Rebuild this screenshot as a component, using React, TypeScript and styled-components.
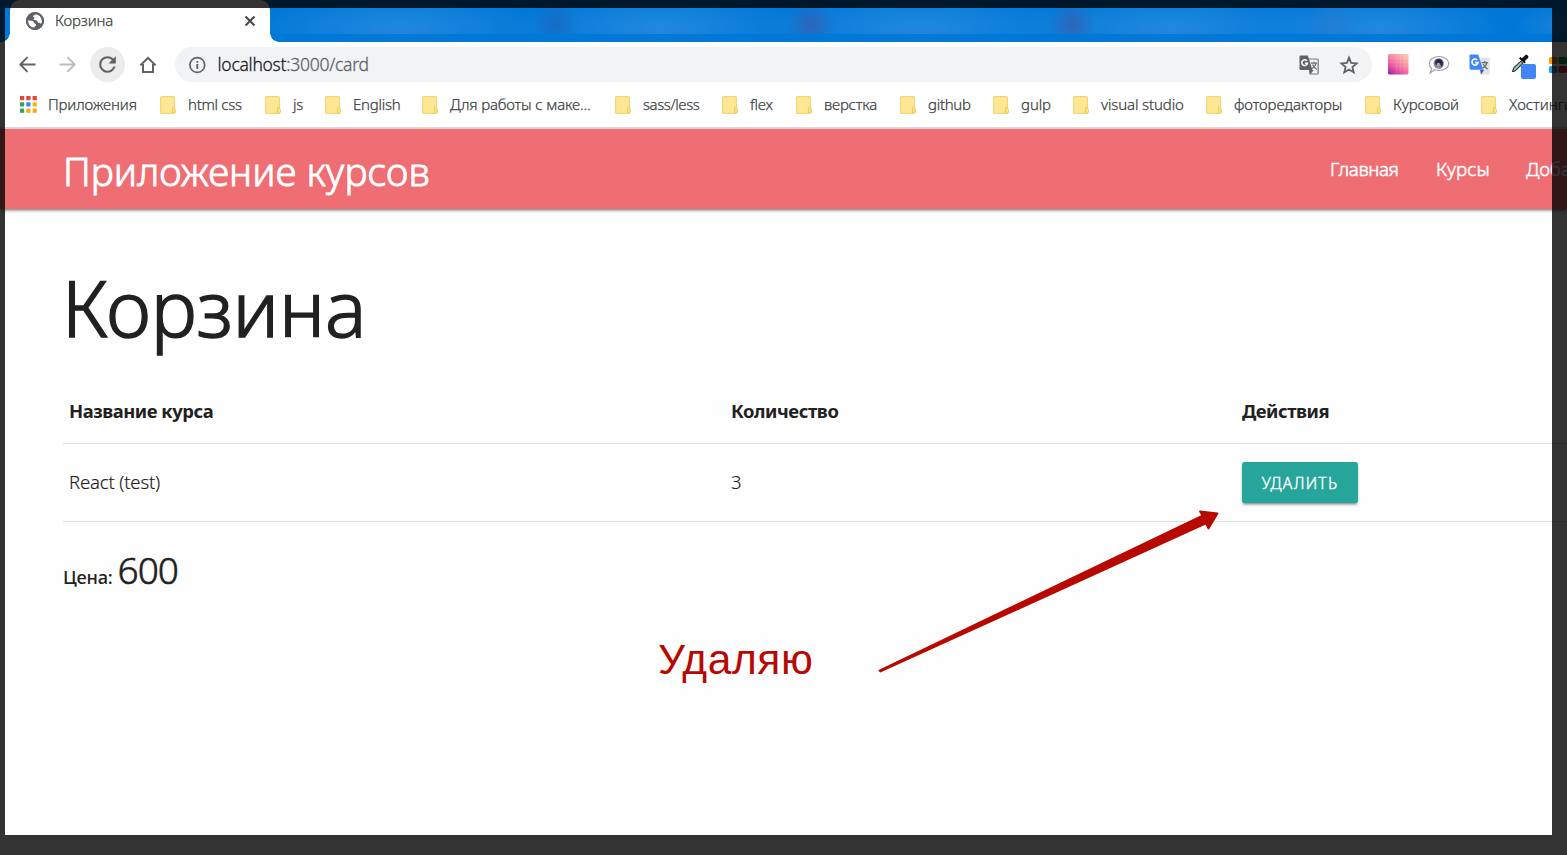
import React from 'react';
import styled, { createGlobalStyle } from 'styled-components';

const GlobalStyle = createGlobalStyle`
  * { box-sizing: border-box; }
  body { margin: 0; overflow: hidden; background: #fff; }
`;

const Screen = styled.div`
  position: relative;
  width: 1567px;
  height: 855px;
  overflow: hidden;
  background: #fefefe;
  color: #212121;
  font-family: 'Noto Sans', 'Open Sans', sans-serif;
`;

const Label = styled.span<{ $size: number; $track?: number; $weight?: number; $color?: string; $stroke?: number }>`
  font-size: ${p => p.$size}px;
  letter-spacing: ${p => p.$track ?? 0}px;
  font-weight: ${p => p.$weight ?? 300};
  color: ${p => p.$color ?? 'inherit'};
  -webkit-text-stroke: ${p => p.$stroke ?? 0}px currentColor;
  white-space: nowrap;
`;

/* ---- browser window ---- */

const TabStrip = styled.div`
  display: flex;
  height: 42px;
  padding-left: 10px;
  background: #0078d7;
`;

const Tab = styled.div`
  position: relative;
  z-index: 1;
  display: flex;
  align-items: center;
  width: 260px;
  height: 42px;
  padding: 0 14px 0 16px;
  border-radius: 10px 10px 0 0;
  background: #fff;
  &::before,
  &::after {
    content: '';
    position: absolute;
    bottom: 0;
    width: 9px;
    height: 9px;
  }
  &::before {
    left: -9px;
    background: radial-gradient(circle at 0 0, transparent 8.5px, #fff 9px);
  }
  &::after {
    right: -9px;
    background: radial-gradient(circle at 100% 0, transparent 8.5px, #fff 9px);
  }
`;

const TabTitle = styled.div`
  flex: 1;
  padding-left: 11px;
  line-height: 40px;
  height: 42px;
  color: #3c4043;
`;

const BlurredTabs = styled.div`
  flex: 1;
  height: 34px;
  background:
    radial-gradient(ellipse 24px 24px at 541px 25px, rgba(70, 84, 165, 0.6), transparent),
    radial-gradient(ellipse 24px 24px at 802px 25px, rgba(70, 84, 165, 0.6), transparent),
    radial-gradient(ellipse 24px 26px at 286px 24px, rgba(30, 100, 190, 0.7), transparent),
    radial-gradient(ellipse 26px 24px at 1060px 24px, rgba(50, 120, 205, 0.5), transparent),
    radial-gradient(ellipse 150px 34px at 130px 28px, #1f87dd 10%, transparent),
    radial-gradient(ellipse 150px 34px at 390px 28px, #1f87dd 10%, transparent),
    radial-gradient(ellipse 160px 34px at 650px 28px, #1f87dd 10%, transparent),
    radial-gradient(ellipse 160px 34px at 900px 28px, #1f87dd 10%, transparent),
    radial-gradient(ellipse 130px 34px at 1110px 28px, #1f87dd 10%, transparent),
    radial-gradient(ellipse 40px 22px at 1285px 26px, #1781da, transparent),
    #0078d7;
`;

const Toolbar = styled.div`
  display: flex;
  align-items: center;
  height: 45px;
  padding-left: 15px;
  background: #fff;
`;

const ToolButton = styled.div<{ $active?: boolean }>`
  display: flex;
  flex: none;
  align-items: center;
  justify-content: center;
  width: 35px;
  height: 35px;
  border-radius: 50%;
  background: ${p => (p.$active ? '#ececed' : 'transparent')};
`;

const NavButtons = styled.div`
  display: flex;
  flex: none;
  gap: 5px;
  width: 165px;
  margin-left: -5px;
`;

const Omnibox = styled.div`
  display: flex;
  flex: none;
  align-items: center;
  width: 1197px;
  height: 35px;
  padding: 0 13px 0 13px;
  border-radius: 18px;
  background: #f1f3f4;
`;

const Url = styled.div`
  flex: 1;
  padding-left: 11.5px;
  line-height: 33px;
`;

const OmniActions = styled.div`
  display: flex;
  gap: 20px;
`;

const Extensions = styled.div`
  display: flex;
  flex: none;
  align-items: center;
  gap: 19px;
  padding-left: 16px;
`;

const PipetteSlot = styled.div`
  display: flex;
  margin: 3px -7px 0 2px;
`;

const Bookmarks = styled.div`
  display: flex;
  height: 42px;
  padding: 0 0 7px 20px;
  border-bottom: 2px solid #ddd5da;
  background: #fff;
  color: #3c4043;
`;

const Bookmark = styled.div<{ $slot: number }>`
  display: flex;
  flex: none;
  align-items: center;
  width: ${p => p.$slot}px;
  line-height: 32px;
`;

const BookmarkIcon = styled.div`
  display: flex;
  flex: none;
  width: 28px;
  padding-top: 2px;
`;

/* ---- page ---- */

const NavBar = styled.nav`
  position: relative;
  display: flex;
  align-items: center;
  height: 80px;
  padding-left: 63px;
  background: #ee6e73;
  color: #fff;
  box-shadow: 0 2px 3px rgba(0, 0, 0, 0.26), 0 3px 2px -2px rgba(0, 0, 0, 0.3);
`;

const Brand = styled.div`
  flex: none;
  width: 1267px;
  padding-top: 12px;
  line-height: 80px;
`;

const NavLink = styled.div<{ $slot: number }>`
  flex: none;
  width: ${p => p.$slot}px;
  line-height: 80px;
`;

const Content = styled.main`
  width: 1600px;
  padding: 40px 0 0 63px;
`;

const Heading = styled.h1`
  height: 131px;
  margin: 0 0 0 -1px;
  line-height: 116px;
  font-weight: 400;
`;

const TableRow = styled.div<{ $height: number }>`
  display: grid;
  grid-template-columns: 662px 511px 1fr;
  align-items: center;
  height: ${p => p.$height}px;
  border-bottom: 1px solid #dfdfdf;
`;

const Cell = styled.div<{ $lift?: boolean }>`
  padding-left: 6px;
  padding-bottom: ${p => (p.$lift ? 2 : 0)}px;
`;

const DeleteButton = styled.button`
  display: block;
  width: 116px;
  height: 41px;
  padding: 1px 0 0;
  border: 0;
  border-radius: 2.5px;
  background: #26a69a;
  color: #fff;
  font-family: inherit;
  line-height: 41px;
  box-shadow: 0 2px 3px rgba(0, 0, 0, 0.26), 0 3px 2px -2px rgba(0, 0, 0, 0.25);
`;

const Total = styled.p`
  display: flex;
  align-items: baseline;
  gap: 5px;
  margin: 20px 0 0;
  line-height: 56px;
`;

/* ---- annotations over the capture ---- */

const Note = styled.div`
  position: absolute;
  top: 635px;
  left: 658px;
  color: #b70902;
  font: 42.5px/50px 'Liberation Sans', Arial, sans-serif;
  letter-spacing: 0.6px;
`;

const Arrow = styled.svg`
  position: absolute;
  top: 500px;
  left: 870px;
`;

const Selection = styled.div`
  position: absolute;
  z-index: 5;
  top: 8px;
  left: 5px;
  width: 1547px;
  height: 827px;
  box-shadow: 0 0 0 60px rgba(0, 0, 0, 0.8);
`;

const GREY = '#5f6368';

const GlobeIcon = () => (
  <svg width="18" height="18" viewBox="0 0 18 18">
    <circle cx="9" cy="9" r="9" fill={GREY} />
    <path d="M2 8.200c1.800.7 3.700.2 5 1 1.300.8.6 1.700 1.800 2.300 1 .5 1.700 1 1.100 2-.6.900-1.500.9-1.700 2.200C4.800 15.700 2 13 2 9z" fill="#fff" />
    <path d="M9.800 2.200c-.6 1.200-2.700.7-2.700 2.100 0 1 1.400.6 1.400 1.600 0 .8-1.300 1-.8 1.900.5.800 2.100.2 3 .8.900.6.600 1.900 1.900 2.100 1 .1 1.600.2 2 1l1.300-.6c.9-4.600-1.700-8.300-6.100-8.900z" fill="#fff" />
    <circle cx="9" cy="9" r="8" fill="none" stroke={GREY} strokeWidth="2" />
  </svg>
);

const CloseIcon = () => (
  <svg width="12" height="12" viewBox="0 0 12 12">
    <path d="M1.500 1.500l9 9M10.500 1.500l-9 9" stroke="#45494d" strokeWidth="2.100" />
  </svg>
);

const ArrowIcon = ({ forward }: { forward?: boolean }) => (
  <svg width="17" height="17" viewBox="0 0 17 17" fill="none" stroke={forward ? '#babcbe' : GREY} strokeWidth="1.900">
    {forward ? <path d="M.5 8.500h15M8.500 1.200l7.200 7.300-7.200 7.300" /> : <path d="M16.500 8.500h-15M8.500 1.200L1.300 8.500l7.200 7.300" />}
  </svg>
);

const ReloadIcon = () => (
  <svg width="25" height="25" viewBox="0 0 24 24" fill={GREY}>
    <path d="M17.650 6.350A7.958 7.958 0 0 0 12 4a8 8 0 1 0 7.730 10h-2.080A6 6 0 1 1 12 6c1.660 0 3.140.690 4.220 1.780L13 11h7V4l-2.350 2.350z" />
  </svg>
);

const HomeIcon = () => (
  <svg width="18" height="18" viewBox="0 0 18 18" fill="none" stroke={GREY} strokeWidth="2">
    <path d="M1.300 9.400L9 2l7.700 7.400M4 8v8h10V8" />
  </svg>
);

const InfoIcon = () => (
  <svg width="18" height="18" viewBox="0 0 18 18">
    <circle cx="9.300" cy="9" r="7.400" fill="none" stroke={GREY} strokeWidth="1.700" />
    <path d="M9.300 8v5M9.300 4.900v1.900" stroke={GREY} strokeWidth="1.900" />
  </svg>
);

const TranslateIcon = ({ color }: { color?: boolean }) => (
  <svg width={color ? 21 : 20} height={color ? 21 : 20} viewBox="0 0 20 20">
    <path
      d="M9 4h9.300q.9 0 .9.900v13.200q0 .9-.9.900H11z"
      fill={color ? '#e1e3e6' : '#f1f3f4'}
      stroke={color ? '#e1e3e6' : '#75797d'}
      strokeWidth="1.200"
    />
    <path d="M10.500 15h4l-3 4.500z" fill={color ? '#3a5bc7' : GREY} />
    <path d="M1.500.5h7.300l4.700 14.600H1.500Q.5 15.100.5 14.100V1.500q0-1 1-1z" fill={color ? '#4285f4' : GREY} />
    <path d="M12 8.200h6M15 6.700v1.500M17 8.200c-.5 2.600-2.500 4.600-4 5.300M13.500 9.500c.8 2 2.500 3.500 4.200 5" fill="none" stroke="#6c7075" strokeWidth="1.200" />
    <path d="M7.900 5.700A2.900 2.900 0 1 0 8.600 8.200H5.900" fill="none" stroke="#fff" strokeWidth="1.500" />
  </svg>
);

const StarIcon = () => (
  <svg width="20" height="20" viewBox="0 0 20 20">
    <path d="M10 2.600l2.100 5.300 5.500.500-4.200 3.600 1.300 5.400L10 14.500l-4.700 2.900 1.300-5.400-4.200-3.600 5.500-.500z" fill="none" stroke={GREY} strokeWidth="1.800" />
  </svg>
);

const MosaicIcon = () => (
  <svg width="21" height="21" viewBox="0 0 21 21">
    <defs>
      <linearGradient id="mosaic" x1="0" y1="1" x2="0.700" y2="0">
        <stop offset="0" stopColor="#9320a0" />
        <stop offset="0.400" stopColor="#ee5aa3" />
        <stop offset="0.750" stopColor="#fb9aa5" />
        <stop offset="1" stopColor="#fdc0aa" />
      </linearGradient>
    </defs>
    <rect width="20.500" height="20.500" rx="1.500" fill="url(#mosaic)" />
    <path d="M8.500 0v20M12.500 0v20M16.500 0v20M0 4.500h20M0 8.500h20M0 12.500h20" stroke="#fff" strokeOpacity="0.080" />
  </svg>
);

const BubbleIcon = () => (
  <svg width="22" height="20" viewBox="0 0 22 20">
    <path d="M11 1.500c5.500 0 9.700 3 9.700 7s-4.200 7-9.700 7c-1.500 0-3-.200-4.300-.700L2.300 18l1.300-4.500C2 12.200 1.300 10.500 1.300 8.500c0-4 4.200-7 9.700-7z" fill="#fff" stroke="#a3a3a6" strokeWidth="1.200" />
    <circle cx="10.700" cy="8.500" r="5.200" fill="#8b8a9e" />
    <path d="M7 6.500a4.200 4.200 0 0 1 7.800.5c.4 2-.3 3.800-1.300 5l-1.500-3.500-2.500-1-1.500 3.500z" fill="#25264a" />
    <circle cx="10.400" cy="9.500" r="1.400" fill="#caa09c" />
  </svg>
);

const PipetteIcon = () => (
  <svg width="26" height="28" viewBox="0 0 26 28">
    <path d="M1.500 19.500l1.500-4 6.800-6.300 2 2-6.300 6.500-2.500 1.800z" fill="#9fc9b0" stroke="#263a30" strokeWidth="1.100" />
    <path d="M8 6.500l5.500 5 1.300-1.300-1-1.200 3-2.700c1.800-1.800-.9-4.600-2.800-2.900l-3 2.800-1.500-1.200z" fill="#111" />
    <rect x="10" y="12" width="15" height="15" rx="2" fill="#4285f4" />
  </svg>
);

const TilesIcon = () => (
  <svg width="18" height="16" viewBox="0 0 18 16">
    <rect width="8.500" height="7" rx="1.500" fill="#fb9a0b" />
    <rect x="9.500" width="8.500" height="7" rx="1.500" fill="#12a454" />
    <rect y="9" width="8.500" height="7" rx="1.500" fill="#2e9fe6" />
    <rect x="9.500" y="9" width="8.500" height="7" rx="1.500" fill="#e53a2e" />
  </svg>
);

const APP_COLORS = ['#e94335', '#e94335', '#e94335', '#34a156', '#3c87f3', '#f3b013', '#34a156', '#f3b013', '#f3b013'];

const AppsIcon = () => (
  <svg width="17" height="17" viewBox="0 0 17 17">
    {APP_COLORS.map((fill, i) => (
      <rect key={i} x={(i % 3) * 6.300} y={Math.floor(i / 3) * 6.300} width="4.200" height="4.200" fill={fill} />
    ))}
  </svg>
);

const FolderIcon = () => (
  <svg width="16" height="18" viewBox="0 0 16 18">
    <rect x="0.600" y="0.600" width="13.800" height="16.800" rx="1" fill="#ffe793" stroke="#f1d67a" strokeWidth="1.200" />
    <path d="M12.500 16.800v-4.500q0-1 1-1h1v1.200q1 0 1 1v2.300q0 1.200-1.200 1.200z" fill="#ffe07a" stroke="#eccd62" />
  </svg>
);

const BOOKMARKS: { label: string; slot: number; track: number }[] = [
  { label: 'html css', slot: 105, track: -0.3 },
  { label: 'js', slot: 60, track: -0.2 },
  { label: 'English', slot: 97, track: -0.25 },
  { label: 'Для работы с маке...', slot: 193, track: -0.16 },
  { label: 'sass/less', slot: 107, track: -0.42 },
  { label: 'flex', slot: 74, track: -0.2 },
  { label: 'верстка', slot: 104, track: -0.2 },
  { label: 'github', slot: 93, track: -0.3 },
  { label: 'gulp', slot: 80, track: -0.1 },
  { label: 'visual studio', slot: 133, track: -0.12 },
  { label: 'фоторедакторы', slot: 159, track: -0.12 },
  { label: 'Курсовой', slot: 116, track: -0.05 },
  { label: 'Хостинги', slot: 110, track: 0 },
];

export default function App() {
  return (
    <Screen>
      <GlobalStyle />
      <TabStrip>
        <Tab>
          <GlobeIcon />
          <TabTitle><Label $size={15} $stroke={0.25} $track={-0.1}>Корзина</Label></TabTitle>
          <CloseIcon />
        </Tab>
        <BlurredTabs />
      </TabStrip>
      <Toolbar>
        <NavButtons>
          <ToolButton><ArrowIcon /></ToolButton>
          <ToolButton><ArrowIcon forward /></ToolButton>
          <ToolButton $active><ReloadIcon /></ToolButton>
          <ToolButton><HomeIcon /></ToolButton>
        </NavButtons>
        <Omnibox>
          <InfoIcon />
          <Url>
            <Label $size={17.5} $track={-0.26} $stroke={0.3} $color="#202124">localhost</Label>
            <Label $size={17.5} $track={-0.26} $stroke={0.3} $color="#5f6368">:3000/card</Label>
          </Url>
          <OmniActions><TranslateIcon /><StarIcon /></OmniActions>
        </Omnibox>
        <Extensions>
          <MosaicIcon />
          <BubbleIcon />
          <TranslateIcon color />
          <PipetteSlot><PipetteIcon /></PipetteSlot>
          <TilesIcon />
        </Extensions>
      </Toolbar>
      <Bookmarks>
        <Bookmark $slot={140}>
          <BookmarkIcon><AppsIcon /></BookmarkIcon>
          <Label $size={15} $stroke={0.25} $track={-0.15}>Приложения</Label>
        </Bookmark>
        {BOOKMARKS.map(b => (
          <Bookmark key={b.label} $slot={b.slot}>
            <BookmarkIcon><FolderIcon /></BookmarkIcon>
            <Label $size={15} $stroke={0.25} $track={b.track}>{b.label}</Label>
          </Bookmark>
        ))}
      </Bookmarks>

      <NavBar>
        <Brand><Label $size={38.8} $track={0.05} $stroke={0.9}>Приложение курсов</Label></Brand>
        <NavLink $slot={106}><Label $size={18.75} $track={-0.4} $stroke={0.5}>Главная</Label></NavLink>
        <NavLink $slot={90}><Label $size={18.75} $track={0.1} $stroke={0.5}>Курсы</Label></NavLink>
        <NavLink $slot={90}><Label $size={18.75} $stroke={0.5}>Доба</Label></NavLink>
      </NavBar>
      <Content>
        <Heading><Label $size={77.6} $track={-0.1} $stroke={1.5}>Корзина</Label></Heading>
        <TableRow $height={64}>
          <Cell $lift><Label $size={18.4} $track={-0.46} $weight={700}>Название курса</Label></Cell>
          <Cell $lift><Label $size={18.4} $track={-0.4} $weight={700}>Количество</Label></Cell>
          <Cell $lift><Label $size={18.4} $track={-0.45} $weight={700}>Действия</Label></Cell>
        </TableRow>
        <TableRow $height={78}>
          <Cell $lift><Label $size={18.5} $track={-0.15} $stroke={0.15}>React (test)</Label></Cell>
          <Cell $lift><Label $size={18.5} $stroke={0.15}>3</Label></Cell>
          <Cell>
            <DeleteButton><Label $size={15.5} $track={1.3} $stroke={0.4}>УДАЛИТЬ</Label></DeleteButton>
          </Cell>
        </TableRow>
        <Total>
          <Label $size={18.2} $track={-0.2} $weight={500}>Цена:</Label>
          <Label $size={37} $track={-1} $stroke={0.6}>600</Label>
        </Total>
      </Content>

      <Note>Удаляю</Note>
      <Arrow width="360" height="180" viewBox="0 0 360 180">
        <path
          d="M9.500 170.500L332.500 15.500L330 11.500L347.500 13.500L338.500 28.500L336 23.500L10.500 171.500z"
          fill="#b70902"
          stroke="#b70902"
          strokeWidth="1.800"
          strokeLinejoin="round"
        />
      </Arrow>
      <Selection />
    </Screen>
  );
}
